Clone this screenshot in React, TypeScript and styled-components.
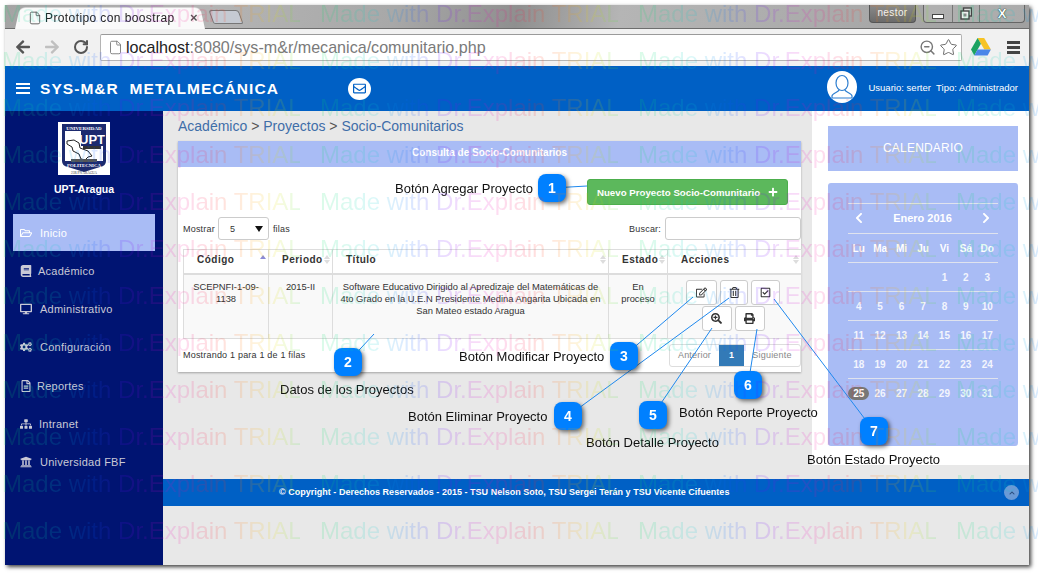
import React from "react";
import styled, { createGlobalStyle } from "styled-components";
import {
  FaArrowLeft,
  FaArrowRight,
  FaBook,
  FaChevronLeft,
  FaChevronRight,
  FaChevronUp,
  FaCogs,
  FaDesktop,
  FaPlus,
  FaPrint,
  FaRegCheckSquare,
  FaRegEdit,
  FaRegEnvelope,
  FaRegFileAlt,
  FaRegFolderOpen,
  FaRegTrashAlt,
  FaSearchPlus,
  FaSitemap,
  FaUniversity,
} from "react-icons/fa";
import { File, Star, ZoomOut, RotateCw } from "lucide-react";

const GlobalStyle = createGlobalStyle`
  html, body { margin: 0; padding: 0; background: #fff; }
  body { font-family: "Liberation Sans", Arial, sans-serif; }
  * { box-sizing: border-box; }
`;

const Page = styled.div`
  position: relative;
  width: 1038px;
  height: 574px;
  overflow: hidden;
  padding: 5px 9px 9px 5px;
  background: #fff;
`;

const Window = styled.div`
  width: 1024px;
  height: 560px;
  display: flex;
  flex-direction: column;
  box-shadow: 2px 2px 4px rgba(0, 0, 0, 0.75);
  background: #e8e8e8;
`;

const TabStrip = styled.div`
  height: 24px;
  flex-shrink: 0;
  display: flex;
  align-items: flex-end;
  padding-left: 10px;
  background: linear-gradient(100deg, #a4a4a4 0%, #b4b4b4 20%, #a8a8a8 38%, #8f8f8f 50%, #b5b5b5 60%, #a0a0a0 100%);
  border-bottom: 1px solid #6e6e6e;
`;

const Tab = styled.div`
  position: relative;
  width: 190px;
  height: 23px;
  display: flex;
  align-items: center;
  gap: 3px;
  padding-left: 13px;
  margin-bottom: -1px;
  font-size: 12px;
  letter-spacing: 0.4px;
  color: #222;
  &::before {
    content: "";
    position: absolute;
    inset: 0;
    z-index: 0;
    background: #fafafa;
    border-radius: 6px 6px 0 0;
    transform: perspective(60px) rotateX(8deg);
    transform-origin: bottom;
  }
  > * { position: relative; }
`;

const TabTitle = styled.span`
  flex: 1;
`;

const TabClose = styled.span`
  font-size: 13px;
  font-weight: bold;
  color: #555;
  margin-right: 7px;
`;

const NewTab = styled.div`
  width: 30px;
  height: 14px;
  margin: 0 0 4px 6px;
  background: #c5cad2;
  border: 1px solid #777;
  border-radius: 3px 3px 2px 2px;
  transform: skewX(20deg);
`;

const WindowButtons = styled.div`
  margin-left: auto;
  align-self: flex-start;
  display: flex;
  gap: 7px;
  padding-right: 4px;
`;

const UserChip = styled.div`
  width: 47px;
  height: 18px;
  border: 1px solid #555;
  border-top: none;
  border-radius: 0 0 4px 4px;
  background: linear-gradient(#8a8a8a, #6b6b6b);
  color: #f4f4f4;
  font-size: 10px;
  letter-spacing: 0.4px;
  text-align: center;
  line-height: 16px;
`;

const Controls = styled.div`
  width: 102px;
  height: 18px;
  border: 1px solid #666;
  border-top: none;
  border-radius: 0 0 4px 4px;
  display: grid;
  grid-template-columns: 29px 27px 1fr;
  background: rgba(255, 255, 255, 0.12);
`;

const ControlCell = styled.div`
  display: flex;
  align-items: center;
  justify-content: center;
  border-right: 1px solid #777;
  color: #fff;
  font-size: 13px;
  font-weight: bold;
  text-shadow: 0 0 1px #222, 0 0 1px #222;
  &:last-child { border-right: none; }
`;

const MinGlyph = styled.span`
  width: 12px;
  height: 5px;
  margin-top: 5px;
  background: #fff;
  border: 1px solid #444;
`;

const Toolbar = styled.div`
  height: 37px;
  flex-shrink: 0;
  display: flex;
  align-items: center;
  padding: 0 9px 1px 8px;
  background: #f1f1f1;
`;

const NavIcons = styled.div`
  width: 87px;
  display: flex;
  align-items: center;
  gap: 13px;
  padding-left: 2px;
  font-size: 16px;
  color: #555;
`;

const Forward = styled.span`
  display: flex;
  color: #c0c0c0;
`;

const UrlBar = styled.div`
  width: 862px;
  height: 27px;
  display: flex;
  align-items: center;
  gap: 3px;
  padding: 0 3px 0 7px;
  background: #fff;
  border: 1px solid #b4b4b4;
  border-top-color: #9a9a9a;
  border-radius: 2px;
  font-size: 16.1px;
  color: #7a7a7a;
`;

const UrlText = styled.div`
  flex: 1;
`;

const UrlHost = styled.span`
  color: #222;
`;

const ToolbarRight = styled.div`
  flex: 1;
  display: flex;
  align-items: center;
  justify-content: space-between;
  padding: 0 0 0 9px;
`;

const MenuBars = styled.div`
  width: 13px;
  height: 13px;
  border-top: 3px solid #444;
  border-bottom: 3px solid #444;
  &::after {
    content: "";
    display: block;
    margin-top: 2px;
    height: 3px;
    background: #444;
  }
`;

const Header = styled.header`
  height: 45px;
  flex-shrink: 0;
  display: flex;
  align-items: center;
  padding: 0 11px;
  background: #0060c5;
  color: #fff;
`;

const Burger = styled.div`
  width: 14px;
  height: 11px;
  margin-right: 10px;
  border-top: 2.5px solid #fff;
  border-bottom: 2.5px solid #fff;
  &::after {
    content: "";
    display: block;
    margin-top: 1.5px;
    height: 2.5px;
    background: #fff;
  }
`;

const Brand = styled.div`
  width: 308px;
  font-size: 15.5px;
  font-weight: bold;
  letter-spacing: 1.05px;
  white-space: pre;
`;

const MailButton = styled.div`
  width: 23px;
  height: 22px;
  border-radius: 50%;
  background: #fff;
  color: #0060c5;
  display: flex;
  align-items: center;
  justify-content: center;
  font-size: 13px;
`;

const HeaderUser = styled.div`
  margin-left: auto;
  display: flex;
  align-items: center;
  gap: 11px;
  font-size: 9.5px;
  letter-spacing: 0.02px;
  white-space: pre;
  margin-top: -3px;
`;

const Avatar = styled.div`
  width: 30px;
  height: 32px;
  border-radius: 50%;
  background: #fff;
  display: flex;
  align-items: center;
  justify-content: center;
`;

const Body = styled.div`
  flex: 1;
  display: flex;
  min-height: 0;
`;

const Sidebar = styled.aside`
  width: 158px;
  flex-shrink: 0;
  background: #001472;
  padding-top: 11px;
  display: flex;
  flex-direction: column;
  align-items: center;
  color: #fff;
`;

const SideLogo = styled.div`
  width: 52px;
  height: 53px;
  display: flex;
`;

const SideName = styled.div`
  margin: 8px 0 19px;
  font-size: 10.5px;
  font-weight: bold;
  line-height: 12px;
`;

const Menu = styled.nav`
  width: 142px;
  display: flex;
  flex-direction: column;
  gap: 1.3px;
`;

const MenuItem = styled.div<{ $active?: boolean; $gap: number }>`
  height: 37px;
  display: flex;
  align-items: center;
  gap: ${(p) => p.$gap}px;
  padding-left: 7px;
  font-size: 11px;
  letter-spacing: 0.25px;
  color: ${(p) => (p.$active ? "#fff" : "#c9c9d6")};
  background: ${(p) => (p.$active ? "#a9bcf5" : "transparent")};
  svg { font-size: 12px; flex-shrink: 0; }
`;

const Main = styled.main`
  flex: 1;
  display: flex;
  flex-direction: column;
`;

const Columns = styled.div`
  height: 368px;
  flex-shrink: 0;
  display: flex;
  align-items: flex-start;
`;

const LeftColumn = styled.div`
  width: 649px;
  padding-left: 15px;
`;

const Breadcrumb = styled.div`
  height: 30px;
  padding-top: 7px;
  font-size: 14px;
  line-height: 16px;
  color: #555;
`;

const Crumb = styled.span`
  color: #3f6ea8;
`;

const Panel = styled.section`
  width: 623px;
  background: #fff;
  box-shadow: 0 1px 2px rgba(0, 0, 0, 0.3);
`;

const PanelTitle = styled.div`
  height: 26px;
  background: #a9bcf5;
  color: #fff;
  font-size: 10px;
  font-weight: bold;
  text-align: center;
  line-height: 23px;
`;

const PanelBody = styled.div`
  height: 205px;
  padding: 12px 0 0 5px;
  display: flex;
  flex-direction: column;
`;

const ActionRow = styled.div`
  display: flex;
  justify-content: flex-end;
  padding-right: 13px;
`;

const NewButton = styled.button`
  width: 201px;
  height: 26px;
  padding: 0;
  display: flex;
  align-items: center;
  justify-content: center;
  gap: 8px;
  background: #5cb85c;
  border: 1px solid #4cae4c;
  border-radius: 3px;
  color: #fff;
  font: bold 9.7px "Liberation Sans", Arial, sans-serif;
  svg { font-size: 10px; }
`;

const FilterRow = styled.div`
  height: 23px;
  margin-top: 12px;
  display: flex;
  align-items: center;
  font-size: 9px;
  color: #333;
  letter-spacing: 0.2px;
`;

const SelectBox = styled.div`
  width: 51px;
  height: 23px;
  margin: 0 4px 0 3px;
  padding: 0 5px 0 11px;
  display: flex;
  align-items: center;
  justify-content: space-between;
  background: #fff;
  border: 1px solid #ccc;
  border-radius: 3px;
`;

const SelectArrow = styled.span`
  width: 0;
  height: 0;
  border-left: 4px solid transparent;
  border-right: 4px solid transparent;
  border-top: 6px solid #111;
`;

const SearchGroup = styled.div`
  margin-left: auto;
  display: flex;
  align-items: center;
  gap: 4px;
`;

const SearchInput = styled.div`
  width: 136px;
  height: 23px;
  background: #fff;
  border: 1px solid #ccc;
  border-radius: 3px;
`;

const Table = styled.table`
  width: 618px;
  margin-top: 9px;
  border-collapse: collapse;
  table-layout: fixed;
  font-size: 9.4px;
  color: #333;
`;

const HeadCell = styled.th<{ $w: number }>`
  width: ${(p) => p.$w}px;
  height: 24px;
  padding: 0 2px 3px 13px;
  border: 1px solid #ddd;
  border-bottom-width: 2px;
  text-align: left;
  font-size: 10px;
  letter-spacing: 0.5px;
`;

const HeadInner = styled.div`
  display: flex;
  align-items: center;
  justify-content: space-between;
`;

const SortGlyph = styled.span<{ $on?: boolean }>`
  display: flex;
  flex-direction: column;
  gap: 1px;
  &::before {
    content: "";
    border-left: 3px solid transparent;
    border-right: 3px solid transparent;
    border-bottom: 4px solid ${(p) => (p.$on ? "#8a8ad8" : "#ddd")};
  }
  &::after {
    content: "";
    border-left: 3px solid transparent;
    border-right: 3px solid transparent;
    border-top: 4px solid ${(p) => (p.$on ? "transparent" : "#ddd")};
  }
`;

const Cell = styled.td`
  height: 65px;
  padding: 6px 5px 0;
  vertical-align: top;
  text-align: center;
  line-height: 12.4px;
  background: #f9f9f9;
  border: 1px solid #ddd;
`;

const ActionsGrid = styled.div`
  display: flex;
  flex-wrap: wrap;
  justify-content: center;
  gap: 1px 3px;
  margin: -1px 1px 0 -2px;
`;

const IconButton = styled.button<{ $w: number }>`
  width: ${(p) => p.$w}px;
  height: 25px;
  padding: 0;
  display: flex;
  align-items: center;
  justify-content: center;
  background: #fff;
  border: 1px solid #ccc;
  border-radius: 3px;
  color: #333;
  font-size: 11px;
`;

const TableFooter = styled.div`
  flex: 1;
  display: flex;
  align-items: center;
  justify-content: space-between;
  font-size: 9px;
  letter-spacing: 0.2px;
  color: #333;
  padding-bottom: 1px;
`;

const Pagination = styled.div`
  display: flex;
  height: 23px;
  border: 1px solid #ddd;
  border-radius: 3px;
  font-size: 9px;
  color: #888;
`;

const PageLink = styled.div<{ $w: number; $active?: boolean }>`
  width: ${(p) => p.$w}px;
  display: flex;
  align-items: center;
  justify-content: center;
  font-weight: ${(p) => (p.$active ? "bold" : "normal")};
  color: ${(p) => (p.$active ? "#fff" : "#888")};
  background: ${(p) => (p.$active ? "#337ab7" : "transparent")};
`;

const RightColumn = styled.div`
  width: 217px;
  height: 354px;
  padding: 15px 11px 0 16px;
  background: #fff;
`;

const CalendarTitle = styled.div`
  height: 45px;
  background: #a9bcf5;
  color: #fff;
  font-size: 12px;
  letter-spacing: 0.2px;
  text-align: center;
  line-height: 45px;
`;

const CalendarBox = styled.div`
  height: 263px;
  margin-top: 12px;
  padding: 20px 20px 0;
  background: #a9bcf5;
  border-radius: 3px;
  color: #fff;
`;

const CalendarNav = styled.div`
  height: 30px;
  display: flex;
  align-items: center;
  justify-content: space-between;
  padding: 0 6px 2px 5px;
  border-top: 1px solid #dfe3ee;
  font-size: 11px;
  font-weight: bold;
  svg { font-size: 12px; }
`;

const CalendarRow = styled.div`
  height: 29px;
  display: grid;
  grid-template-columns: repeat(7, 1fr);
  align-items: center;
  border-top: 1px solid #dfe3ee;
  font-size: 10px;
  text-align: center;
`;

const DayName = styled.span`
  font-weight: bold;
`;

const Day = styled.span<{ $today?: boolean }>`
  font-weight: bold;
  border-radius: 8px;
  padding: 1px 0;
  background: ${(p) => (p.$today ? "#777" : "transparent")};
  color: ${(p) => (p.$today ? "#fff" : "#f3f5fd")};
`;

const Footer = styled.footer`
  height: 27px;
  flex-shrink: 0;
  display: flex;
  align-items: center;
  padding: 0 10px 2px 116px;
  background: #0060c5;
  color: #fff;
  font-size: 9px;
  font-weight: bold;
  letter-spacing: 0.02px;
`;

const ScrollTop = styled.div`
  width: 15px;
  height: 15px;
  margin-left: auto;
  margin-top: 2px;
  border-radius: 50%;
  background: #6a9ad6;
  color: #2a4f80;
  display: flex;
  align-items: center;
  justify-content: center;
  font-size: 6px;
`;

// annotations drawn over the page
const Lines = styled.svg`
  position: absolute;
  inset: 0;
  pointer-events: none;
`;

const Badge = styled.div<{ $x: number; $y: number }>`
  position: absolute;
  left: ${(p) => p.$x - 14}px;
  top: ${(p) => p.$y - 14}px;
  width: 28px;
  height: 28px;
  display: flex;
  align-items: center;
  justify-content: center;
  background: #0080ff;
  border-radius: 8px;
  box-shadow: 2px 2px 4px rgba(0, 0, 0, 0.55);
  color: #fff;
  font: bold 14px "Liberation Sans", Arial, sans-serif;
`;

const Note = styled.div<{ $x: number; $y: number }>`
  position: absolute;
  left: ${(p) => p.$x}px;
  top: ${(p) => p.$y - 7}px;
  font-size: 13px;
  line-height: 16px;
  color: #111;
  white-space: nowrap;
`;

const Watermark = styled.div`
  position: absolute;
  left: 2px;
  top: -1px;
  display: grid;
  grid-template-columns: repeat(4, 318px);
  grid-auto-rows: 47px;
  pointer-events: none;
  opacity: 0.14;
`;

const Stamp = styled.span`
  width: 298px;
  height: 30px;
  font-size: 24px;
  line-height: 30px;
  white-space: nowrap;
  color: transparent;
  background: linear-gradient(
    90deg,
    #00e060 0%,
    #00d0d0 18%,
    #0060ff 30%,
    #7000ff 42%,
    #f000c0 56%,
    #ff2020 72%,
    #ffa000 84%,
    #e0e000 92%,
    #40e040 100%
  );
  -webkit-background-clip: text;
  background-clip: text;
`;

const dayHeads = ["Lu", "Ma", "Mi", "Ju", "Vi", "Sá", "Do"];
const weeks: (number | null)[][] = [
  [null, null, null, null, 1, 2, 3],
  [4, 5, 6, 7, 8, 9, 10],
  [11, 12, 13, 14, 15, 16, 17],
  [18, 19, 20, 21, 22, 23, 24],
  [25, 26, 27, 28, 29, 30, 31],
];

const menu = [
  { label: "Inicio", icon: <FaRegFolderOpen />, gap: 8, active: true },
  { label: "Académico", icon: <FaBook />, gap: 6 },
  { label: "Administrativo", icon: <FaDesktop />, gap: 8 },
  { label: "Configuración", icon: <FaCogs />, gap: 8 },
  { label: "Reportes", icon: <FaRegFileAlt />, gap: 5 },
  { label: "Intranet", icon: <FaSitemap />, gap: 7 },
  { label: "Universidad FBF", icon: <FaUniversity />, gap: 8 },
];

const columns = [
  { label: "Código", w: 85, on: true },
  { label: "Periodo", w: 64 },
  { label: "Título", w: 276 },
  { label: "Estado", w: 59 },
  { label: "Acciones", w: 134 },
];

const badges = [
  { n: 1, x: 552, y: 188, to: [587, 186] },
  { n: 2, x: 348, y: 362, to: [374, 334] },
  { n: 3, x: 624, y: 356, to: [693, 297] },
  { n: 4, x: 568, y: 416, to: [729, 298] },
  { n: 5, x: 653, y: 415, to: [712, 328] },
  { n: 6, x: 748, y: 385, to: [757, 329] },
  { n: 7, x: 874, y: 431, to: [774, 299] },
];

const notes = [
  { text: "Botón Agregar Proyecto", x: 395, y: 188 },
  { text: "Datos de los Proyectos", x: 280, y: 389 },
  { text: "Botón Modificar Proyecto", x: 459, y: 356 },
  { text: "Botón Eliminar Proyecto", x: 408, y: 416 },
  { text: "Botón Detalle Proyecto", x: 586, y: 442 },
  { text: "Botón Reporte Proyecto", x: 679, y: 412 },
  { text: "Botón Estado Proyecto", x: 807, y: 459 },
];

const UptLogo = () => (
  <svg width="52" height="53" viewBox="0 0 52 53">
    <rect width="52" height="53" fill="#fff" />
    <path d="M4 2h44v37q0 5-6 6l-16 5-16-5q-6-1-6-6z" fill="#1c2a6e" />
    <rect x="7" y="9" width="38" height="30" fill="#fff" />
    <rect x="23" y="9" width="22" height="15" fill="#1c2a6e" />
    <rect x="25" y="24" width="18" height="3" fill="#333" />
    <text x="26" y="7.5" fontSize="5" fontWeight="bold" fill="#fff" textAnchor="middle" fontFamily="Liberation Serif">UNIVERSIDAD</text>
    <text x="34" y="22" fontSize="13" fontWeight="bold" fill="#fff" textAnchor="middle" fontFamily="Liberation Sans">UPT</text>
    <path d="M9 19l7-1 5 3 1 5 8 3 4 5-4 1-3 3-4-1-2-5-6-3-1-4-5-3z" fill="#fff" stroke="#222" strokeWidth="1" />
    <rect x="13" y="37" width="26" height="3" fill="#555" />
    <text x="26" y="45" fontSize="4.8" fontWeight="bold" fill="#fff" textAnchor="middle" fontFamily="Liberation Serif">POLITECNICA</text>
    <text x="26" y="52" fontSize="3.4" fill="#333" textAnchor="middle" fontFamily="Liberation Serif">23R PN   ARAGUA</text>
  </svg>
);

const DriveLogo = () => (
  <svg width="20" height="18" viewBox="0 0 20 18">
    <path d="M6.6 0h6.6l6.7 11.6h-6.6z" fill="#f7c325" />
    <path d="M6.6 0l3.3 5.8L3.3 17.4 0 11.6z" fill="#1ba261" />
    <path d="M6.6 11.6h13.3l-3.3 5.8H3.3z" fill="#4a86e8" />
  </svg>
);

const RestoreGlyph = () => (
  <svg width="12" height="13" viewBox="0 0 12 13" fill="none" stroke="#444" strokeWidth="1.4">
    <rect x="3.5" y="1" width="8" height="8" fill="#ddd" />
    <rect x="1" y="4" width="8" height="8" fill="#eee" />
    <rect x="3.5" y="6.5" width="3" height="3" fill="#888" stroke="none" />
  </svg>
);

const UserOutline = () => (
  <svg width="24" height="26" viewBox="0 0 24 26" fill="none" stroke="#2f7fd0" strokeWidth="1.2">
    <ellipse cx="12" cy="9" rx="6" ry="7.5" />
    <path d="M9 15.5c0 3-7 3.5-7 6.5v2h20v-2c0-3-7-3.5-7-6.5" />
  </svg>
);

export default function App() {
  return (
    <Page>
      <GlobalStyle />
      <Window>
        <TabStrip>
          <Tab>
            <File size={14} strokeWidth={1.5} color="#555" />
            <TabTitle>Prototipo con boostrap</TabTitle>
            <TabClose>×</TabClose>
          </Tab>
          <NewTab />
          <WindowButtons>
            <UserChip>nestor</UserChip>
            <Controls>
              <ControlCell>
                <MinGlyph />
              </ControlCell>
              <ControlCell>
                <RestoreGlyph />
              </ControlCell>
              <ControlCell>X</ControlCell>
            </Controls>
          </WindowButtons>
        </TabStrip>
        <Toolbar>
          <NavIcons>
            <FaArrowLeft />
            <Forward>
              <FaArrowRight />
            </Forward>
            <RotateCw size={16} strokeWidth={3} />
          </NavIcons>
          <UrlBar>
            <File size={15} strokeWidth={1.4} color="#777" />
            <UrlText>
              <UrlHost>localhost</UrlHost>:8080/sys-m&amp;r/mecanica/comunitario.php
            </UrlText>
            <ZoomOut size={17} strokeWidth={2} color="#777" />
            <Star size={19} strokeWidth={1.2} color="#666" />
          </UrlBar>
          <ToolbarRight>
            <DriveLogo />
            <MenuBars />
          </ToolbarRight>
        </Toolbar>
        <Header>
          <Burger />
          <Brand>SYS-M&amp;R  METALMECÁNICA</Brand>
          <MailButton>
            <FaRegEnvelope />
          </MailButton>
          <HeaderUser>
            <Avatar>
              <UserOutline />
            </Avatar>
            <span>Usuario: serter  Tipo: Administrador</span>
          </HeaderUser>
        </Header>
        <Body>
          <Sidebar>
            <SideLogo>
              <UptLogo />
            </SideLogo>
            <SideName>UPT-Aragua</SideName>
            <Menu>
              {menu.map((m) => (
                <MenuItem key={m.label} $active={m.active} $gap={m.gap}>
                  {m.icon}
                  {m.label}
                </MenuItem>
              ))}
            </Menu>
          </Sidebar>
          <Main>
            <Columns>
              <LeftColumn>
                <Breadcrumb>
                  <Crumb>Académico</Crumb> &gt; <Crumb>Proyectos</Crumb> &gt; <Crumb>Socio-Comunitarios</Crumb>
                </Breadcrumb>
                <Panel>
                  <PanelTitle>Consulta de Socio-Comunitarios</PanelTitle>
                  <PanelBody>
                    <ActionRow>
                      <NewButton>
                        Nuevo Proyecto Socio-Comunitario
                        <FaPlus />
                      </NewButton>
                    </ActionRow>
                    <FilterRow>
                      Mostrar
                      <SelectBox>
                        5
                        <SelectArrow />
                      </SelectBox>
                      filas
                      <SearchGroup>
                        Buscar:
                        <SearchInput />
                      </SearchGroup>
                    </FilterRow>
                    <Table>
                      <thead>
                        <tr>
                          {columns.map((c) => (
                            <HeadCell key={c.label} $w={c.w}>
                              <HeadInner>
                                {c.label}
                                <SortGlyph $on={c.on} />
                              </HeadInner>
                            </HeadCell>
                          ))}
                        </tr>
                      </thead>
                      <tbody>
                        <tr>
                          <Cell>SCEPNFI-1-09-1138</Cell>
                          <Cell>2015-II</Cell>
                          <Cell>
                            Software Educativo Dirigido al Apredizaje del Matemáticas de 4to Grado en la U.E.N Presidente
                            Medina Angarita Ubicada en San Mateo estado Aragua
                          </Cell>
                          <Cell>
                            En
                            <br />
                            proceso
                          </Cell>
                          <Cell>
                            <ActionsGrid>
                              <IconButton $w={31}>
                                <FaRegEdit />
                              </IconButton>
                              <IconButton $w={28}>
                                <FaRegTrashAlt />
                              </IconButton>
                              <IconButton $w={29}>
                                <FaRegCheckSquare />
                              </IconButton>
                              <IconButton $w={30}>
                                <FaSearchPlus />
                              </IconButton>
                              <IconButton $w={30}>
                                <FaPrint />
                              </IconButton>
                            </ActionsGrid>
                          </Cell>
                        </tr>
                      </tbody>
                    </Table>
                    <TableFooter>
                      Mostrando 1 para 1 de 1 filas
                      <Pagination>
                        <PageLink $w={49}>Anterior</PageLink>
                        <PageLink $w={25} $active>
                          1
                        </PageLink>
                        <PageLink $w={56}>Siguiente</PageLink>
                      </Pagination>
                    </TableFooter>
                  </PanelBody>
                </Panel>
              </LeftColumn>
              <RightColumn>
                <CalendarTitle>CALENDARIO</CalendarTitle>
                <CalendarBox>
                  <CalendarNav>
                    <FaChevronLeft />
                    Enero 2016
                    <FaChevronRight />
                  </CalendarNav>
                  <CalendarRow>
                    {dayHeads.map((d) => (
                      <DayName key={d}>{d}</DayName>
                    ))}
                  </CalendarRow>
                  {weeks.map((week, i) => (
                    <CalendarRow key={i}>
                      {week.map((d, j) => (
                        <Day key={j} $today={d === 25}>
                          {d}
                        </Day>
                      ))}
                    </CalendarRow>
                  ))}
                </CalendarBox>
              </RightColumn>
            </Columns>
            <Footer>
              © Copyright - Derechos Reservados - 2015 - TSU Nelson Soto, TSU Sergei Terán y TSU Vicente Cifuentes
              <ScrollTop>
                <FaChevronUp />
              </ScrollTop>
            </Footer>
          </Main>
        </Body>
      </Window>

      <Lines width="1038" height="574" viewBox="0 0 1038 574">
        {badges.map((b) => (
          <line key={b.n} x1={b.x} y1={b.y} x2={b.to[0]} y2={b.to[1]} stroke="#1e88ee" strokeWidth="1" />
        ))}
      </Lines>
      {badges.map((b) => (
        <Badge key={b.n} $x={b.x} $y={b.y}>
          {b.n}
        </Badge>
      ))}
      {notes.map((n) => (
        <Note key={n.text} $x={n.x} $y={n.y}>
          {n.text}
        </Note>
      ))}
      <Watermark>
        {Array.from({ length: 48 }, (_, i) => (
          <Stamp key={i}>Made with Dr.Explain TRIAL</Stamp>
        ))}
      </Watermark>
    </Page>
  );
}
